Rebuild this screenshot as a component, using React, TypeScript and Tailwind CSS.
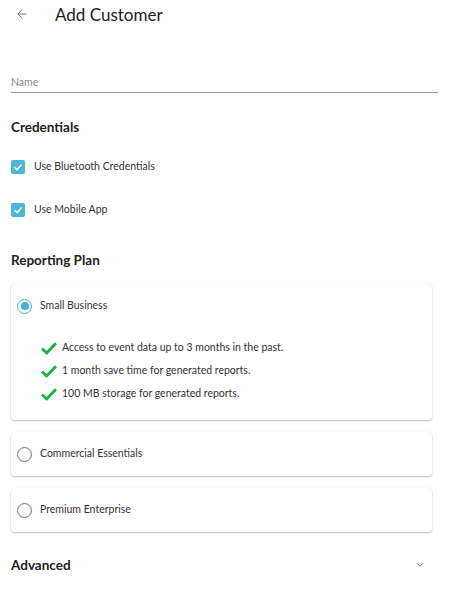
import { ArrowLeft, ChevronDown } from "lucide-react";

const plans = [
  {
    name: "Small Business",
    selected: true,
    features: [
      "Access to event data up to 3 months in the past.",
      "1 month save time for generated reports.",
      "100 MB storage for generated reports.",
    ],
  },
  { name: "Commercial Essentials", selected: false, features: [] },
  { name: "Premium Enterprise", selected: false, features: [] },
];

function CheckBox({ label }: { label: string }) {
  return (
    <label className="flex items-center gap-[9px] h-[14px]">
      <span className="w-[14px] h-[14px] rounded-[2px] bg-[#4db6db] flex items-center justify-center">
        <svg width="10" height="10" viewBox="0 0 10 10" fill="none">
          <path d="M1.5 5.2 L4 7.6 L8.6 2.6" stroke="white" strokeWidth="1.5" />
        </svg>
      </span>
      <span className="text-[10.5px] text-[#333]">{label}</span>
    </label>
  );
}

function Radio({ checked }: { checked: boolean }) {
  return (
    <span
      className={`w-[15px] h-[15px] rounded-full border-[1.5px] flex items-center justify-center ${
        checked ? "border-[#3fb2dc]" : "border-[#6f6f6f]"
      }`}
    >
      {checked && <span className="w-[8px] h-[8px] rounded-full bg-[#3fb2dc]" />}
    </span>
  );
}

function GreenCheck() {
  return (
    <svg width="16" height="14" viewBox="0 0 16 14">
      <path d="M1 7.5 L5.6 12 L15 2.2" stroke="#1fb141" strokeWidth="3" fill="none" strokeLinejoin="round" />
    </svg>
  );
}

export default function App() {
  return (
    <div className="w-[450px] h-[593px] bg-white text-[#222] font-['Lato',sans-serif] overflow-hidden">
      <div className="flex items-center h-[28px] pl-[15px]">
        <ArrowLeft size={14} strokeWidth={1.25} className="text-[#444]" />
        <h1 className="ml-[26px] text-[17px] leading-none text-[#222]">Add Customer</h1>
      </div>

      <div className="px-[11px] mr-[1px]">
        <div className="mt-[48px] border-b border-[#9a9a9a] pb-[4px]">
          <div className="text-[10.5px] text-[#8a8a8a] leading-[12px]">Name</div>
        </div>

        <h2 className="mt-[25px] text-[13.5px] font-bold leading-[18px]">Credentials</h2>
        <div className="mt-[24px] flex flex-col gap-[29px]">
          <CheckBox label="Use Bluetooth Credentials" />
          <CheckBox label="Use Mobile App" />
        </div>

        <h2 className="mt-[34px] text-[13.5px] font-bold leading-[18px]">Reporting Plan</h2>

        <div className="mt-[15px] w-[421px] flex flex-col gap-[12px]">
          {plans.map((p) => (
            <div
              key={p.name}
              className="rounded-[4px] bg-white shadow-[0_1px_2px_rgba(0,0,0,0.25),0_0_1px_rgba(0,0,0,0.1)] px-[6px]"
            >
              <div className="flex items-center h-[44px] gap-[8px]">
                <Radio checked={p.selected} />
                <span className="text-[10.5px] text-[#333]">{p.name}</span>
              </div>
              {p.features.length > 0 && (
                <ul className="pl-[24px] pt-[12px] pb-[18px] flex flex-col gap-[7px]">
                  {p.features.map((f) => (
                    <li key={f} className="flex items-center gap-[5px] h-[16px]">
                      <GreenCheck />
                      <span className="text-[10.5px] text-[#333]">{f}</span>
                    </li>
                  ))}
                </ul>
              )}
            </div>
          ))}
        </div>

        <div className="mt-[24px] flex items-center justify-between w-[421px] pr-[7px]">
          <h2 className="text-[13.5px] font-bold leading-[18px]">Advanced</h2>
          <ChevronDown size={10} strokeWidth={1.75} className="text-[#444]" />
        </div>
      </div>
    </div>
  );
}
